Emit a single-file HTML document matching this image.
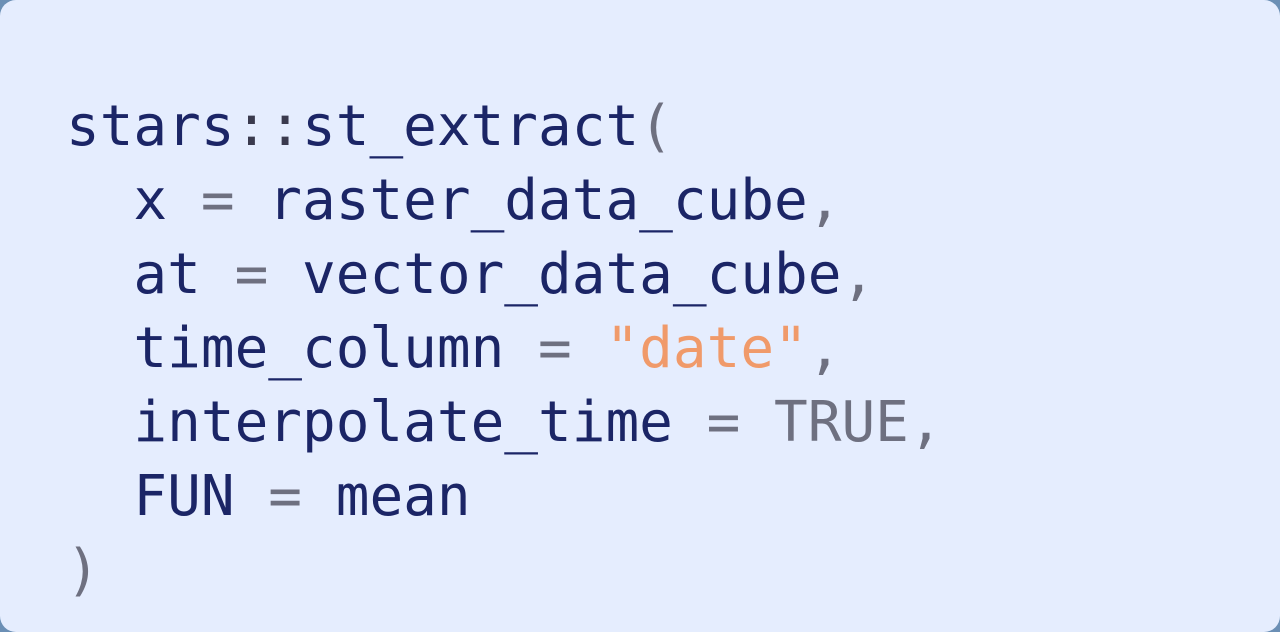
<!DOCTYPE html>
<html><head><meta charset="utf-8"><style>
html,body{margin:0;padding:0;}
body{width:1280px;height:632px;background:#6b8fb5;overflow:hidden;}
.card{position:absolute;left:0;top:0;width:1280px;height:632px;background:#e5edfe;border-radius:16px;}
pre{position:absolute;left:66px;top:90px;margin:0;font-family:"DejaVu Sans Mono","Liberation Mono",monospace;font-size:56px;line-height:74px;color:#1b2566;}
.p{color:#6e7080}.c{color:#3a3a4e}.s{color:#f09a6a}
</style></head><body><div class="card"><pre>stars<span class="c">::</span>st_extract<span class="p">(</span>
  x <span class="p">=</span> raster_data_cube<span class="p">,</span>
  at <span class="p">=</span> vector_data_cube<span class="p">,</span>
  time_column <span class="p">=</span> <span class="s">"date"</span><span class="p">,</span>
  interpolate_time <span class="p">=</span> <span class="p">TRUE,</span>
  FUN <span class="p">=</span> mean
<span class="p">)</span></pre></div></body></html>
